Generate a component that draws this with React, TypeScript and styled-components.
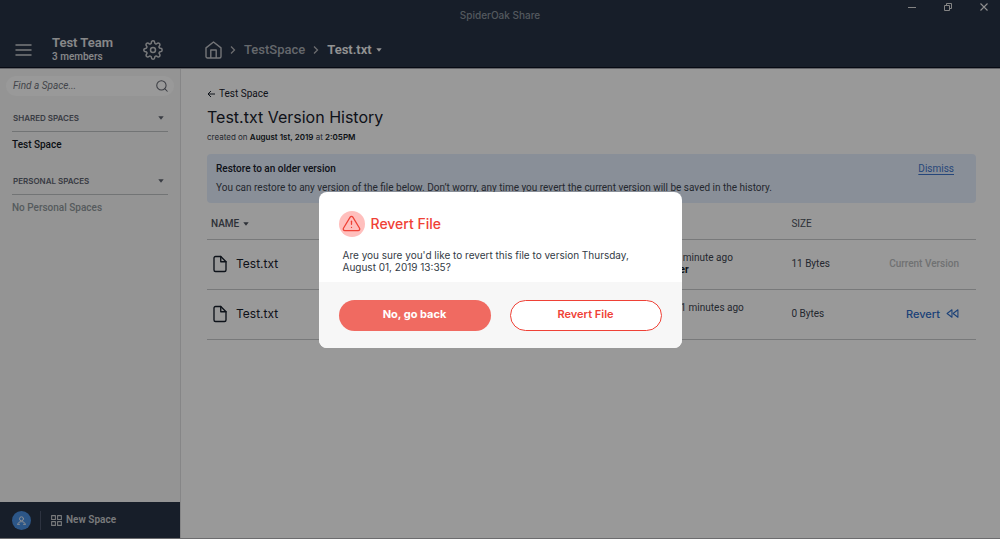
import React from "react";
import styled, { createGlobalStyle } from "styled-components";
import { FiSettings, FiFile, FiRewind, FiAlertTriangle, FiGrid, FiSearch } from "react-icons/fi";

const navy = "#273245";
const red = "#ef4136";
const display = `Inter, "Liberation Sans", sans-serif`;

const GlobalStyle = createGlobalStyle`
  *, *::before, *::after { box-sizing: border-box; }
  body { margin: 0; font-family: Roboto, "Liberation Sans", sans-serif; font-size: 10px; line-height: 12px; color: #18202c; background: #fff; }
  button, input { font: inherit; color: inherit; border: 0; background: none; padding: 0; margin: 0; }
  h1, h2, h3, p, ul { margin: 0; padding: 0; font-weight: 400; }
  ul { list-style: none; }
  svg { display: block; flex: none; }
`;

const Page = styled.div`
  min-height: 100vh;
  display: flex;
  flex-direction: column;
  border-bottom: 1px solid #b4b5b8;
`;

const TopBar = styled.header`
  display: flex;
  flex-direction: column;
  background: ${navy};
  color: #e2e3e5;
  border-bottom: 1px solid #0c1120;
`;

const TitleBar = styled.div`
  display: grid;
  grid-template-columns: 1fr auto 1fr;
  height: 32px;
`;

const AppName = styled.div`
  grid-column: 2;
  padding-top: 9px;
  color: #8b949d;
  font-family: ${display};
  font-weight: 500;
`;

const WindowControls = styled.div`
  display: flex;
  justify-content: flex-end;
  align-items: flex-start;
  gap: 26px;
  padding: 2px 11px 0 0;
`;

const IconButton = styled.button`
  display: flex;
  align-items: center;
  justify-content: center;
`;

const NavRow = styled.div`
  display: flex;
  align-items: center;
  height: 35px;
`;

const TeamArea = styled.div`
  display: flex;
  align-items: center;
  width: 181px;
  padding: 0 18px 0 15px;
`;

const TeamName = styled.div`
  flex: 1;
  padding: 1px 0 0 20px;
  font-size: 10px;
  line-height: 14px;
  font-weight: 500;
  strong { display: block; font-size: 13px; line-height: 14px; font-weight: 600; }
`;

const Crumbs = styled.nav`
  display: flex;
  align-items: center;
  gap: 8px;
  padding-left: 24px;
  font-size: 13px;
  line-height: 16px;
  font-weight: 500;
`;

const CrumbLink = styled.a`
  color: #a8adb4;
  text-decoration: none;
`;

const CurrentCrumb = styled.button`
  display: flex;
  align-items: center;
  gap: 4px;
  color: #f5f5f5;
  font-weight: 600;
`;

const Body = styled.div`
  flex: 1;
  display: flex;
  border-top: 1px solid #a4a6ac;
`;

const Sidebar = styled.aside`
  width: 181px;
  flex: none;
  display: flex;
  flex-direction: column;
  background: #f7f7f7;
  border-right: 1px solid #dfe0e2;
`;

const SearchBox = styled.label`
  display: flex;
  align-items: center;
  height: 20px;
  margin: 7px 6px 0;
  padding: 0 5px 0 7px;
  border-radius: 10px;
  background: #fff;
  color: #62656f;
  input { flex: 1; min-width: 0; outline: 0; font-style: italic; }
  input::placeholder { color: #70737c; opacity: 1; }
`;

const SpaceGroup = styled.section`
  margin: 16px 12px 0;
  & + & { margin-top: 24px; }
`;

const GroupTitle = styled.button`
  display: flex;
  align-items: center;
  justify-content: space-between;
  width: 100%;
  padding: 0 4px 7px 1px;
  border-bottom: 1px solid #bfc1c4;
  color: #5f6470;
  font-family: ${display};
  font-size: 8px;
  line-height: 12px;
  font-weight: 600;
`;

const SpaceItem = styled.li<{ $empty?: boolean }>`
  padding-top: 7px;
  font-weight: 500;
  color: ${(p) => (p.$empty ? "#8f979b" : "#141a26")};
`;

const SidebarFooter = styled.footer`
  display: flex;
  align-items: center;
  gap: 9px;
  height: 36px;
  margin-top: auto;
  padding-left: 12px;
  background: ${navy};
  color: #c9cbce;
`;

const Avatar = styled.button`
  display: flex;
  align-items: center;
  justify-content: center;
  width: 19px;
  height: 19px;
  border-radius: 50%;
  background: #4a90e2;
`;

const NewSpace = styled.button`
  display: flex;
  align-items: center;
  gap: 3px;
  height: 19px;
  padding-left: 9px;
  border-left: 1px solid #4b566b;
  font-weight: 600;
`;

const Main = styled.main`
  flex: 1;
  min-width: 0;
  padding: 19px 24px 24px 26px;
`;

const BackLink = styled.a`
  display: flex;
  align-items: center;
  gap: 4px;
  color: inherit;
  text-decoration: none;
`;

const Title = styled.h1`
  margin-top: 7px;
  font-family: ${display};
  font-size: 16px;
  line-height: 20px;
`;

const Created = styled.p`
  margin-top: 4px;
  font-family: ${display};
  font-size: 8px;
  color: #3c4450;
  strong { font-weight: 600; color: #141a26; }
`;

const Notice = styled.section`
  display: flex;
  justify-content: space-between;
  margin-top: 11px;
  padding: 9px 22px 9px 9px;
  border-radius: 4px;
  background: #e5effd;
  h2 { font-size: 10px; line-height: 12px; font-weight: 500; }
  p { margin-top: 7px; color: #3c4450; }
`;

const Dismiss = styled.button`
  align-self: flex-start;
  color: #3f76cc;
  text-decoration: underline;
  text-underline-offset: 2px;
`;

const Versions = styled.table`
  width: 100%;
  table-layout: fixed;
  border-collapse: collapse;
  th, td { padding: 0; text-align: left; border-bottom: 1px solid #c8cacc; }
  th { height: 36px; padding-top: 7px; font-size: 10px; font-weight: 400; color: #4c525d; }
  th:first-child { width: 56%; padding-left: 4px; }
  th:nth-child(2) { width: 20%; }
  td { height: 50px; color: #3c4450; }
  td:first-child { padding-left: 4px; }
  td:last-child { padding-right: 17px; text-align: right; }
  strong { color: #141a26; }
`;

const SortButton = styled.button`
  display: flex;
  align-items: center;
  gap: 4px;
  font-weight: 500;
`;

const FileName = styled.div`
  display: flex;
  align-items: center;
  gap: 7px;
  font-family: ${display};
  font-size: 12px;
  line-height: 16px;
  color: #18202c;
`;

const Modified = styled.td`
  vertical-align: top;
  div { padding-top: 12px; }
`;

const CurrentLabel = styled.span`
  color: #bbbdc0;
  font-weight: 500;
`;

const RevertLink = styled.button`
  display: inline-flex;
  align-items: center;
  gap: 6px;
  color: #2f6dc8;
  font-family: ${display};
  font-size: 11px;
  font-weight: 500;
`;

const Overlay = styled.div`
  position: fixed;
  inset: 0;
  display: flex;
  align-items: center;
  justify-content: center;
  background: rgba(0, 0, 0, 0.4);
`;

const Dialog = styled.div`
  width: 363px;
  overflow: hidden;
  border-radius: 8px;
  background: #fff;
  font-family: ${display};
`;

const DialogBody = styled.div`
  padding: 19px 20px 9px;
  p { margin-left: 4px; padding: 12px 28px 0 0; color: #333b46; }
`;

const DialogTitle = styled.h2`
  display: flex;
  align-items: center;
  gap: 6px;
  color: ${red};
  font-size: 14px;
  line-height: 18px;
  font-weight: 500;
`;

const WarningBadge = styled.span`
  display: flex;
  align-items: center;
  justify-content: center;
  width: 26px;
  height: 26px;
  padding-bottom: 1px;
  border-radius: 50%;
  background: #ffbfbd;
`;

const DialogActions = styled.div`
  display: grid;
  grid-template-columns: 1fr 1fr;
  gap: 19px;
  padding: 18px 20px 17px;
  background: #f7f7f7;
`;

const ActionButton = styled.button<{ $primary?: boolean }>`
  height: 31px;
  padding-bottom: 2px;
  border-radius: 16px;
  border: ${(p) => (p.$primary ? "0" : `1px solid ${red}`)};
  background: ${(p) => (p.$primary ? "#f06a61" : "#fff")};
  color: ${(p) => (p.$primary ? "#fff" : red)};
  font-size: 11px;
  font-weight: ${(p) => (p.$primary ? 700 : 600)};
`;

const Caret = ({ size = 6 }: { size?: number }) => (
  <svg width={size} height={size} viewBox="0 0 6 6" fill="currentColor"><path d="M.3 1.2h5.400L3 4.800z" /></svg>
);

const Chevron = () => (
  <svg width="6" height="10" viewBox="0 0 6 10" fill="none" stroke="#b3b5b9" strokeWidth="1.3"><path d="M1 1.5 4.5 5 1 8.5" /></svg>
);

const HomeIcon = () => (
  <svg width="17" height="18" viewBox="0 0 17 18" fill="none" stroke="#c2c4c8" strokeWidth="1.4" strokeLinejoin="round">
    <path d="M1 6.9 8.5 1 16 6.9v8.6a1.5 1.5 0 0 1-1.5 1.5h-12A1.5 1.5 0 0 1 1 15.500z" />
    <path d="M5.800 17V9h5.400v8" />
  </svg>
);

const versions = [
  { age: "a minute ago", author: "Test Owner", size: "11 Bytes", current: true },
  { age: "31 minutes ago", author: "Test", size: "0 Bytes", current: false },
];

export default function App() {
  return (
    <>
      <GlobalStyle />
      <Page>
        <TopBar>
          <TitleBar>
            <AppName>SpiderOak Share</AppName>
            <WindowControls>
              <IconButton aria-label="Minimize">
                <svg width="10" height="10" viewBox="0 0 10 10" stroke="#ddd"><path d="M1 5.500h8" /></svg>
              </IconButton>
              <IconButton aria-label="Restore">
                <svg width="10" height="10" viewBox="0 0 10 10" fill="none" stroke="#ddd"><path d="M1.500 3.500h5v5h-5zM3.500 3.500v-2h5v5h-2" /></svg>
              </IconButton>
              <IconButton aria-label="Close">
                <svg width="10" height="10" viewBox="0 0 10 10" stroke="#eee" strokeWidth="1.100"><path d="m1.500 1.500 7 7M8.500 1.500l-7 7" /></svg>
              </IconButton>
            </WindowControls>
          </TitleBar>
          <NavRow>
            <TeamArea>
              <IconButton aria-label="Menu">
                <svg width="17" height="12" viewBox="0 0 17 12" stroke="#c9cbce" strokeWidth="1.500" strokeLinecap="round"><path d="M1 1h15M1 6h15M1 11h15" /></svg>
              </IconButton>
              <TeamName><strong>Test Team</strong>3 members</TeamName>
              <IconButton aria-label="Team settings"><FiSettings size={20} strokeWidth={1.8} color="#c9cbce" /></IconButton>
            </TeamArea>
            <Crumbs aria-label="Breadcrumb">
              <a href="#home" aria-label="Home"><HomeIcon /></a>
              <Chevron />
              <CrumbLink href="#space">TestSpace</CrumbLink>
              <Chevron />
              <CurrentCrumb>Test.txt <Caret /></CurrentCrumb>
            </Crumbs>
          </NavRow>
        </TopBar>
        <Body>
          <Sidebar>
            <SearchBox>
              <input type="text" placeholder="Find a Space..." aria-label="Find a Space" />
              <FiSearch size={14} strokeWidth={1.8} />
            </SearchBox>
            <SpaceGroup>
              <GroupTitle>SHARED SPACES <Caret /></GroupTitle>
              <ul><SpaceItem>Test Space</SpaceItem></ul>
            </SpaceGroup>
            <SpaceGroup>
              <GroupTitle>PERSONAL SPACES <Caret /></GroupTitle>
              <ul><SpaceItem $empty>No Personal Spaces</SpaceItem></ul>
            </SpaceGroup>
            <SidebarFooter>
              <Avatar aria-label="Account">
                <svg width="9" height="9" viewBox="0 0 9 9" fill="none" stroke="#e4ecf6" strokeLinecap="round"><circle cx="4.500" cy="2.800" r="2" /><path d="M.8 8.300C1 6.400 2.300 5.700 4.500 5.700S8 6.400 8.200 8.300M.8 8.300h1.700M6.500 8.300h1.700" /></svg>
              </Avatar>
              <NewSpace><FiGrid size={13} />New Space</NewSpace>
            </SidebarFooter>
          </Sidebar>
          <Main>
            <BackLink href="#space">
              <svg width="8" height="8" viewBox="0 0 8 8" fill="none" stroke="currentColor"><path d="M8 4H1M4 1 1 4l3 3" /></svg>
              Test Space
            </BackLink>
            <Title>Test.txt Version History</Title>
            <Created>created on <strong>August 1st, 2019</strong> at <strong>2:05PM</strong></Created>
            <Notice>
              <div>
                <h2>Restore to an older version</h2>
                <p>You can restore to any version of the file below. Don’t worry, any time you revert the current version will be saved in the history.</p>
              </div>
              <Dismiss>Dismiss</Dismiss>
            </Notice>
            <Versions>
              <thead>
                <tr>
                  <th><SortButton>NAME <Caret /></SortButton></th>
                  <th>DATE</th>
                  <th>SIZE</th>
                  <th aria-label="Action" />
                </tr>
              </thead>
              <tbody>
                {versions.map((v) => (
                  <tr key={v.age}>
                    <td><FileName><FiFile size={18} strokeWidth={1.8} />Test.txt</FileName></td>
                    <Modified><div>Created {v.age}<br /><strong>{v.author}</strong></div></Modified>
                    <td>{v.size}</td>
                    <td>
                      {v.current ? <CurrentLabel>Current Version</CurrentLabel> : <RevertLink>Revert <FiRewind size={13} /></RevertLink>}
                    </td>
                  </tr>
                ))}
              </tbody>
            </Versions>
          </Main>
        </Body>
      </Page>
      <Overlay>
        <Dialog role="dialog" aria-modal="true" aria-labelledby="revert-title">
          <DialogBody>
            <DialogTitle id="revert-title">
              <WarningBadge><FiAlertTriangle size={19} strokeWidth={1.6} /></WarningBadge>
              Revert File
            </DialogTitle>
            <p>Are you sure you'd like to revert this file to version Thursday, August 01, 2019 13:35?</p>
          </DialogBody>
          <DialogActions>
            <ActionButton $primary>No, go back</ActionButton>
            <ActionButton>Revert File</ActionButton>
          </DialogActions>
        </Dialog>
      </Overlay>
    </>
  );
}
